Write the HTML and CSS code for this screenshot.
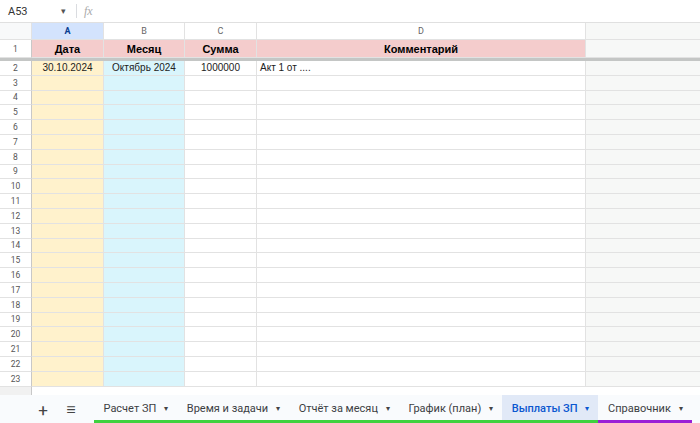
FILE: index.html
```html
<!DOCTYPE html>
<html lang="ru">
<head>
  <meta charset="UTF-8">
  <title>Выплаты ЗП</title>
  <link rel="stylesheet" href="styles.css">
</head>
<body>
  <div class="topbar">
    <div class="namebox">A53</div>
    <div class="caret">▾</div>
    <div class="divider"></div>
    <div class="fx">fx</div>
  </div>
  <div class="sheet" id="sheet">
    <div class="corner"></div>
    <div class="colhead sel">A</div>
    <div class="colhead">B</div>
    <div class="colhead">C</div>
    <div class="colhead">D</div>
    <div class="blank head"></div>

    <div class="rownum r1">1</div>
    <div class="cell title">Дата</div>
    <div class="cell title">Месяц</div>
    <div class="cell title">Сумма</div>
    <div class="cell title">Комментарий</div>
    <div class="blank r1"></div>

    <div class="freeze"></div>

    <div class="rownum">2</div>
    <div class="cell colA center">30.10.2024</div>
    <div class="cell colB center">Октябрь 2024</div>
    <div class="cell center">1000000</div>
    <div class="cell">Акт 1 от ....</div>
    <div class="blank"></div>
  </div>
  <div class="tail">
    <div class="tailnum"></div>
    <div></div>
  </div>
  <div class="tabbar">
    <div class="tool">+</div>
    <div class="tool menu">≡</div>
    <div class="tab green">Расчет ЗП <span class="arr">▾</span></div>
    <div class="tab green">Время и задачи <span class="arr">▾</span></div>
    <div class="tab green">Отчёт за месяц <span class="arr">▾</span></div>
    <div class="tab green">График (план) <span class="arr">▾</span></div>
    <div class="tab green active">Выплаты ЗП <span class="arr">▾</span></div>
    <div class="tab purple">Справочник <span class="arr">▾</span></div>
  </div>
  <script>
    const sheet = document.getElementById("sheet");
    for (let i = 3; i <= 23; i++) {
      sheet.insertAdjacentHTML("beforeend",
        `<div class="rownum">${i}</div>
         <div class="cell colA"></div>
         <div class="cell colB"></div>
         <div class="cell"></div>
         <div class="cell"></div>
         <div class="blank"></div>`);
    }
  </script>
</body>
</html>
```

FILE: styles.css
```css
body {
  margin: 0;
  width: 700px;
  height: 423px;
  overflow: hidden;
  background: #fff;
  font-family: "Liberation Sans", Arial, sans-serif;
  color: #000;
}
.topbar {
  height: 23px;
  display: flex;
  align-items: center;
  font-size: 11px;
  color: #333;
  border-bottom: 1px solid #e0e0e0;
  box-sizing: border-box;
}
.namebox {
  width: 53px;
  padding-left: 8px;
  font-family: "Roboto", sans-serif;
}
.caret {
  font-size: 9px;
  color: #555;
  width: 15px;
}
.divider {
  width: 1px;
  height: 14px;
  background: #dadce0;
  margin: 0 6px 0 0;
}
.fx {
  font-family: "Liberation Serif", serif;
  font-style: italic;
  color: #aaa;
  font-size: 12px;
  margin-left: 1px;
}
.sheet {
  display: grid;
  grid-template-columns: 32px 72px 81px 72px 329px 1fr;
  grid-template-rows: 17px 18px 3px;
  grid-auto-rows: 14.8px;
}
.sheet > div {
  box-sizing: border-box;
  border-right: 1px solid #e2e2e2;
  border-bottom: 1px solid #e2e2e2;
  display: flex;
  align-items: center;
  overflow: hidden;
  white-space: nowrap;
}
.corner {
  background: #f8f9fa;
}
.colhead {
  justify-content: center;
  font-size: 9px;
  color: #666;
  font-family: "Roboto", sans-serif;
}
.colhead.sel {
  background: #d3e3fd;
  color: #0b3d91;
  font-weight: bold;
}
.sheet > .blank {
  background: #f7f8f7;
  border-right: none;
}
.rownum {
  justify-content: center;
  font-size: 8.5px;
  color: #555;
  font-family: "Roboto", sans-serif;
}
.sheet > .rownum {
  border-right: 1px solid #c8c8c8;
}
.cell {
  font-size: 10px;
  padding: 0 3px;
  color: #222;
}
.cell.title {
  background: #f4cccc;
  font-weight: bold;
  font-size: 11px;
  color: #000;
  justify-content: center;
}
.cell.center {
  justify-content: center;
}
.colA {
  background: #fff2cc;
}
.colB {
  background: #d9f5fc;
}
.sheet > .freeze {
  grid-column: 1 / -1;
  background: #c4c6c5;
  border: none;
}
.tail {
  display: grid;
  grid-template-columns: 32px 1fr;
  height: 8px;
}
.tailnum {
  background: #f1f1f1;
  border-right: 1px solid #c8c8c8;
}
.tabbar {
  height: 28px;
  background: #f9fbfd;
  display: flex;
  align-items: stretch;
  padding-left: 33px;
  font-family: "Roboto", "Noto Sans", sans-serif;
  white-space: nowrap;
}
.tool {
  flex: none;
  width: 20px;
  display: flex;
  align-items: center;
  justify-content: center;
  font-size: 17px;
  color: #444;
  margin-right: 8px;
  padding-top: 2px;
}
.tool.menu {
  font-size: 16px;
  margin-right: 13px;
}
.tab {
  flex: none;
  display: flex;
  align-items: center;
  padding: 3px 9px 0 9.5px;
  font-size: 11px;
  color: #3c4043;
  box-sizing: border-box;
  border-bottom: 3px solid transparent;
}
.tab .arr {
  font-size: 8px;
  margin-left: 8px;
  color: #444;
}
.tab.green {
  border-bottom-color: #3fd13f;
}
.tab.purple {
  border-bottom-color: #9a1fd6;
}
.tab.active {
  background: #e1e9f7;
  color: #0b57d0;
  font-weight: 500;
}
.tab.active .arr {
  color: #0b57d0;
}
```
